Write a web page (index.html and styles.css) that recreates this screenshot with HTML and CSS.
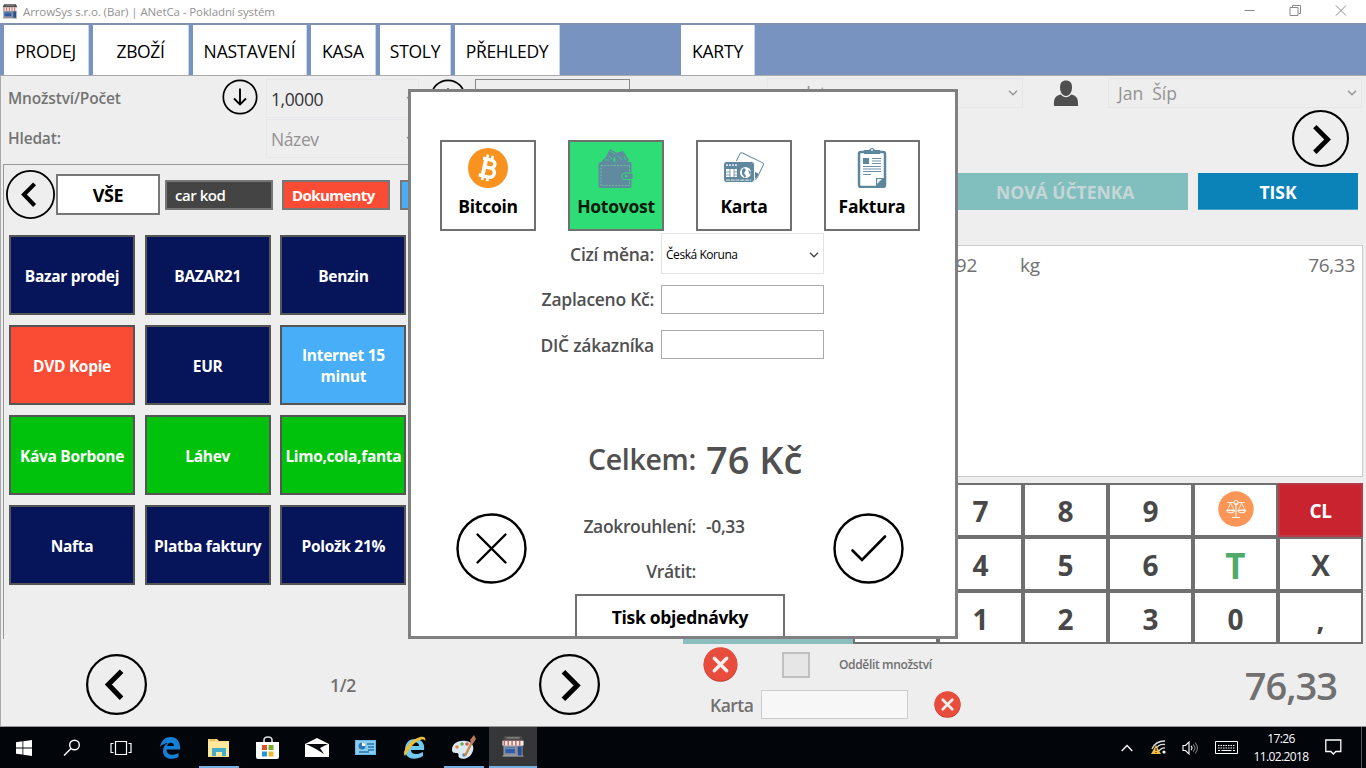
FILE: index.html
```html
<!DOCTYPE html>
<html lang="cs">
<head>
<meta charset="utf-8">
<title>ArrowSys s.r.o. (Bar) | ANetCa - Pokladní systém</title>
<link rel="stylesheet" href="styles.css">
</head>
<body>
<svg class="defs" width="0" height="0">
  <symbol id="left" viewBox="0 0 60 60"><circle cx="30" cy="30" r="28.9" fill="none" stroke="#000" stroke-width="2.2"/><path d="M35 17 22 30 35 43.5" fill="none" stroke="#000" stroke-width="5"/></symbol>
  <symbol id="right" viewBox="0 0 60 60"><circle cx="30" cy="30" r="28.9" fill="none" stroke="#000" stroke-width="2.2"/><path d="M24 17.500 37.500 31 24 44.500" fill="none" stroke="#000" stroke-width="5"/></symbol>
  <symbol id="down" viewBox="0 0 36 36"><circle cx="18" cy="18" r="16.700" fill="none" stroke="#000" stroke-width="1.700"/><path d="M18 9.500V25M12 19.500 18 25.500 24 19.500" fill="none" stroke="#000" stroke-width="1.900"/></symbol>
  <symbol id="chev" viewBox="0 0 10 6"><path d="M1 .8 5 4.800 9 .8" fill="none" stroke="currentColor" stroke-width="1.300"/></symbol>
  <symbol id="del" viewBox="0 0 34 34"><circle cx="17" cy="17.300" r="16.500" fill="#c0392b"/><circle cx="17" cy="16.600" r="16.300" fill="#e84c3d"/><path d="M11 11 23 23M23 11 11 23" stroke="#f7eeee" stroke-width="3.400" stroke-linecap="round"/></symbol>
  <symbol id="shop" viewBox="0 0 24 24"><path d="M3 1h18l2 5H1z" fill="#4b4749"/><path d="M5 2h14v2H5z" fill="#777"/><path d="M2 10h20v12H2z" fill="#8b8f9c"/><path d="M1 6h22v5H1z" fill="#f5eeee"/><path d="M3 6v5M7 6v5M11 6v5M15 6v5M19 6v5" stroke="#c9645e" stroke-width="1.600"/><path d="M4 13h10v6H4z" fill="#2e5ba6"/><path d="M4 14h10" stroke="#7799c8"/><path d="M17 12h4v10h-4z" fill="#294e92"/><path d="M1 22h22" stroke="#aaa"/></symbol>
</svg>

<header class="titlebar">
  <svg class="app-icon" width="16" height="17"><use href="#shop"/></svg>
  <span class="title">ArrowSys s.r.o. (Bar) | ANetCa - Pokladní systém</span>
  <svg class="winbtns" width="104" height="14" fill="none" stroke="#8a8a8a"><path d="M.500 7.500h10M46 4.500h8v8h-8zM48.500 4V2.500h8v8H54.500M92 2.500l10 10M102 2.500l-10 10"/></svg>
</header>
<nav class="nav">
  <a class="tab prodej">PRODEJ</a><a class="tab zbozi">ZBOŽÍ</a><a class="tab nast">NASTAVENÍ</a><a class="tab kasa">KASA</a><a class="tab stoly">STOLY</a><a class="tab preh">PŘEHLEDY</a><a class="tab karty">KARTY</a>
</nav>

<main class="main">
  <section class="left">
    <div class="row qty">
      <span class="lbl">Množství/Počet</span>
      <svg class="down" width="36" height="36"><use href="#down"/></svg>
      <div class="combo"><span>1,0000</span><svg width="9" height="6"><use href="#chev"/></svg></div>
      <svg class="down second" width="36" height="36"><use href="#down"/></svg>
      <div class="blank"></div>
    </div>
    <div class="row search">
      <span class="lbl">Hledat:</span>
      <div class="combo"><span>Název</span><svg width="9" height="6"><use href="#chev"/></svg></div>
    </div>
    <div class="panel">
      <div class="cats">
        <svg width="49" height="49"><use href="#left"/></svg>
        <button class="cat all">VŠE</button>
        <button class="cat black">car kod</button>
        <button class="cat red">Dokumenty</button>
        <button class="cat sky"></button>
      </div>
      <div class="tiles">
        <button class="tile">Bazar prodej</button><button class="tile">BAZAR21</button><button class="tile">Benzin</button>
        <button class="tile red">DVD Kopie</button><button class="tile">EUR</button><button class="tile sky">Internet 15<br>minut</button>
        <button class="tile green">Káva Borbone</button><button class="tile green">Láhev</button><button class="tile green">Limo,cola,fanta</button>
        <button class="tile">Nafta</button><button class="tile">Platba faktury</button><button class="tile">Položk 21%</button>
      </div>
    </div>
    <div class="pager">
      <svg width="61" height="61"><use href="#left"/></svg>
      <span>1/2</span>
      <svg width="61" height="61"><use href="#right"/></svg>
    </div>
  </section>

  <section class="right">
    <div class="users">
      <div class="combo first"><span>det</span><svg width="10" height="6"><use href="#chev"/></svg></div>
      <svg class="user" width="26" height="27" viewBox="0 0 26 27"><path d="M1 26C.500 19 2 15.500 8 14.500 10.500 18 15.500 18 18 14.500 24 15.500 25.500 19 25 26z" fill="#4f4f4f"/><path d="M13 .500C9 .500 7 3 7 7.500S9.500 16 13 16 19 12 19 7.500 17 .500 13 .500z" fill="#4f4f4f"/></svg>
      <div class="combo person"><span>Jan&nbsp; Šíp</span><svg width="10" height="6"><use href="#chev"/></svg></div>
    </div>
    <svg class="next" width="57" height="57"><use href="#right"/></svg>
    <div class="actions"><button class="new">NOVÁ ÚČTENKA</button><button class="print">TISK</button></div>
    <div class="list"><div class="item"><span class="amt">0,092</span><span class="unit">kg</span><span>76,33</span></div></div>
    <div class="pad">
      <button class="teal"></button><button></button><button>7</button><button>8</button><button>9</button>
      <button class="scale"><svg width="36" height="36" viewBox="0 0 36 36"><circle cx="18" cy="18" r="17.700" fill="#fb9657"/><g fill="none" stroke="#fff3e8" stroke-width="1.200"><path d="M18 12v14.500M14 26.500h8M9.500 11.500h6.500M20 11.500h6.500"/><circle cx="18" cy="11.500" r="2"/><path d="M12.500 12 9.500 19h6.500zM23.500 12 20.500 19h6.500z" stroke-width=".9"/><path d="M9 19.500c.500 3 6.500 3 7.500 0zM20 19.500c.500 3 6.500 3 7.500 0z"/></g></svg></button>
      <button class="cl">CL</button>
      <button></button><button>4</button><button>5</button><button>6</button><button class="t">T</button><button>X</button>
      <button></button><button>1</button><button>2</button><button>3</button><button>0</button><button>,</button>
    </div>
    <div class="foot">
      <div class="foot-form">
        <div class="split"><svg width="35" height="35"><use href="#del"/></svg><i class="check"></i><span>Oddělit množství</span></div>
        <div class="card"><span>Karta</span><i class="field"></i><svg width="27" height="27"><use href="#del"/></svg></div>
      </div>
      <span class="sum">76,33</span>
    </div>
  </section>
</main>

<div class="modal">
  <div class="methods">
    <button class="method"><svg width="40" height="40" viewBox="0 0 40 40"><circle cx="20" cy="20" r="20" fill="#f7931e"/><g transform="rotate(13 20 20)" fill="none" stroke="#fff"><path d="M13 11.500h8.500c6 0 6 8 0 8H16M16 19.500h6.500c6.500 0 6.500 9.300 0 9.300H12.500" stroke-width="3.400"/><path d="M16.300 11v18" stroke-width="4"/><path d="M17 7v4M22 7v4M17 29v4M22 29v4" stroke-width="2.600"/></g></svg><span>Bitcoin</span></button>
    <button class="method on"><svg width="40" height="40" viewBox="0 0 40 40"><g fill="#608aa0"><path d="M10 9 14 1l7 4-5 8z"/><path d="M20 5 27 3l6 9-3 3-12-1z"/><path d="M6 13 10 9h5l3 5-2 2H7z"/><path d="M5 14h29q1.500 0 1.500 2v22q0 2-2 2H5q-2.500 0-2.500-2.500V16q0-2 2.500-2z"/></g><path d="M5 17.500h28.500v20H5z" fill="none" stroke="#77c59b" stroke-width=".8" stroke-dasharray="2 1.200"/><path d="M13 8l3 3M22 8l4 4M9 12h4M28 8l2 4M19 10v4M14 3l5 3" stroke="#2edd75" stroke-width=".9"/><path d="M37 25h-8a3.300 3.300 0 0 0 0 6.600H37z" fill="#608aa0" stroke="#2edd75"/><circle cx="30" cy="28.300" r="1.200" fill="#2edd75"/></svg><span>Hotovost</span></button>
    <button class="method"><svg width="40" height="40" viewBox="0 0 40 40"><g transform="rotate(26 26 17)"><rect x="12" y="9.500" width="26" height="18" rx="2" fill="#fff" stroke="#668a9d"/><path d="M12.500 21h25v5h-25z" fill="#587f93"/></g><rect x="-.5" y="13.500" width="31" height="21" rx="3" fill="#5f879d" stroke="#fff"/><path d="M2 21h11v8H2z" fill="#fff"/><path d="M2 24h4M2 27h4M10 24h3M10 27h3M6 21v8M10 21v8" stroke="#5f879d" stroke-width=".8"/><circle cx="21.500" cy="24.500" r="5.500" fill="#fff"/><path d="M18 22l2-2 2 2-2 3 2 3-1 2-3-4zM24 22l3 2-1 3z" fill="#5f879d"/><path d="M2 17.200h12" stroke="#d9e5eb" stroke-width="1.800" stroke-dasharray="2 1"/><path d="M2 32.200h25" stroke="#c9d8e0" stroke-width="1.200" stroke-dasharray="4 .7"/></svg><span>Karta</span></button>
    <button class="method"><svg width="40" height="40" viewBox="0 0 40 40"><rect x="7" y="4" width="26" height="35" rx="2" fill="#fff" stroke="#5d879b" stroke-width="2.500"/><path d="M12 2h5q3-4 6 0h5v4H12z" fill="#5d879b"/><circle cx="20" cy="2" r=".9" fill="#fff"/><path d="M11 10h6v6h-6z" fill="#5d879b"/><path d="M20 10.500h9M20 13h9M20 15.500h9M11 18.500h18M11 21h18M11 23.500h18M11 26.500h8" stroke="#6e93a5" stroke-width="1.100"/><path d="M24 38.500V30h8.500M24 38 32.500 30V39H24z" fill="#5d879b"/><path d="M25 36v-5h5z" fill="#e8f0f3"/></svg><span>Faktura</span></button>
  </div>
  <div class="form">
    <label>Cizí měna:</label><div class="select"><span>Česká Koruna</span><svg width="10" height="6"><use href="#chev"/></svg></div>
    <label>Zaplaceno Kč:</label><i class="input"></i>
    <label>DIČ zákazníka</label><i class="input"></i>
  </div>
  <div class="total"><span class="total-label">Celkem:</span><strong>76 Kč</strong></div>
  <div class="confirm">
    <svg width="71" height="71" viewBox="0 0 71 71" fill="none" stroke="#000" stroke-width="2.400" stroke-linecap="round"><circle cx="35.500" cy="35.500" r="34"/><path d="M21.500 21.500 49.500 49.500M49.500 21.500 21.500 49.500"/></svg>
    <div class="sums"><span>Zaokrouhlení:</span><span>-0,33</span><span>Vrátit:</span><span></span></div>
    <svg width="71" height="71" viewBox="0 0 71 71" fill="none" stroke="#000" stroke-width="2.400" stroke-linecap="round"><circle cx="35.500" cy="35.500" r="34"/><path d="M19.500 37.500 29 47 52 23.500" stroke-width="2.600"/></svg>
  </div>
  <button class="order">Tisk objednávky</button>
</div>

<footer class="taskbar">
  <div class="apps">
    <span class="app"><svg width="16" height="16" fill="#fff"><path d="M0 2.200 6.500 1.300V7.500H0zM7.300 1.200 16 0V7.500H7.300zM0 8.400h6.500v6.200L0 13.700zM7.300 8.400H16V16l-8.700-1.200z"/></svg></span>
    <span class="app"><svg width="18" height="18" fill="none" stroke="#fff" stroke-width="1.400"><circle cx="11.500" cy="6" r="4.800"/><path d="M8 9.500 1 16.500"/></svg></span>
    <span class="app"><svg width="22" height="16" fill="none" stroke="#fff" stroke-width="1.200"><path d="M5.500 1.500h11v13h-11zM3.500 3.500H1v9h2.500M18.500 3.500H21v9h-2.500"/></svg></span>
    <span class="app edge"><svg width="20" height="22" viewBox="0 0 20 22"><path d="M0 10C1 4 5 0 10.500 0 17 0 20 5 20 10v2.500H6.500c0 6 7 6.500 12 3.500v4C13 23 3 23 3 14c0-4 2-6.500 5-8C5 6.200 2 7.500 0 10zM7 9h7c0-4.500-6-4.500-7 0z" fill="#1480d8"/></svg></span>
    <span class="app run"><svg width="22" height="19" viewBox="0 0 22 19"><path d="M0 1h9l2 2h10v16H0z" fill="#f9dc83"/><path d="M0 4h21v14H0z" fill="#ffe79b"/><path d="M4 18v-8h14v8h-4v-4H8v4z" fill="#43acc8"/><path d="M2 2h5" stroke="#d4a13b"/></svg></span>
    <span class="app"><svg width="24" height="24" viewBox="0 0 24 24"><path d="M8 7V4c0-4 8-4 8 0v3" fill="none" stroke="#ddd" stroke-width="1.600"/><path d="M0 6h23v15q0 2-2 2H2q-2 0-2-2z" fill="#fff"/><path d="M6 9h5v5H6z" fill="#d9532c"/><path d="M12.500 9h5v5h-5z" fill="#7dac2d"/><path d="M6 15.500h5v5H6z" fill="#2997ce"/><path d="M12.500 15.500h5v5h-5z" fill="#f0b82e"/></svg></span>
    <span class="app"><svg width="24" height="20" viewBox="0 0 24 20"><path d="M0 6 12 0 24 6V19H0z" fill="#fff"/><path d="M1 6h22L15 10l4 6-8-5z" fill="#05070b"/></svg></span>
    <span class="app"><svg width="22" height="16" viewBox="0 0 22 16"><path d="M0 0h21v15H0z" fill="#65b7e8"/><path d="M1 1h19v13H1z" fill="#8acbf0"/><circle cx="7" cy="6" r="3.500" fill="#2d78b5"/><path d="M7 6V2.500A3.500 3.500 0 0 1 10.500 6z" fill="#fff"/><path d="M12 4h7M13 7h6M13 10h6M4 12h10" stroke="#2575a9" stroke-width="1.400"/></svg></span>
    <span class="app"><svg width="24" height="24" viewBox="0 0 24 24"><path d="M2 14C2 6 7 3 12 3c7 0 10 5 9 11H8c0 5 7 5 12 2v4C12 25 2 23 2 14zM8 10h8c0-5-8-5-8 0z" fill="#70c9ee"/><path d="M2 20C-2 17 6 4 17 1c5-1 6 1 5 4-1-3-8-1-13 5-4 5-6 8-7 10z" fill="#efbe38"/></svg></span>
    <span class="app run"><svg width="26" height="25" viewBox="0 0 26 25"><path d="M1 15C1 8 8 5 15 6c7 1 9 7 6 12-2 5-9 7-12 5-3-1 0-5-3-5-2 0-5 0-5-3z" fill="#dce9f2"/><circle cx="6" cy="12" r="1.800" fill="#e08b41"/><circle cx="11" cy="9" r="1.800" fill="#67ae59"/><circle cx="16" cy="9" r="1.800" fill="#d35b51"/><circle cx="13" cy="20" r="1.800" fill="#4987cc"/><path d="M23 3 14 21" stroke="#c98c45" stroke-width="2.400"/><path d="M19 5l4-5 2 4-4 6z" fill="#b97858"/></svg></span>
    <span class="app active"><svg width="24" height="23"><use href="#shop"/></svg></span>
  </div>
  <div class="tray">
    <svg width="12" height="8" fill="none" stroke="#fff" stroke-width="1.300"><path d="M.700 7 6 1.500 11.300 7"/></svg>
    <svg class="wifi" width="16" height="15" viewBox="0 0 16 15"><g fill="none" stroke="#dcdcdc" stroke-width="1.300"><path d="M1 9C3 4 8 1 14 1M4 10c2-4 6-6 10-5.500M8 11c1-2 4-3.500 6-3"/></g><circle cx="13" cy="12" r="1.600" fill="#fff"/><path d="M5 5 10 14H0z" fill="#f2bb43"/><path d="M5 8v3M5 12v1" stroke="#222"/></svg>
    <svg class="sound" width="17" height="14" fill="none" stroke="#fff" stroke-width="1.100"><path d="M1 4.500h2.500L7 1v12L3.500 9.500H1z"/><path d="M9 5q2 2 0 4"/><path d="M11 3.500q4 3.500 0 7M13 1.500q5 5.500 0 11" stroke="#777"/></svg>
    <svg class="keys" width="24" height="14" fill="none" stroke="#fff"><path d="M.500 .500h22v12H.500z"/><path d="M3 4.500h17M3 7h17" stroke-dasharray="1.500 1"/><path d="M3 9.500h2M6.500 9.500h10M18 9.500h2"/></svg>
    <div class="clock"><span>17:26</span><span>11.02.2018</span></div>
    <svg class="note" width="17" height="17" fill="none" stroke="#fff" stroke-width="1.300"><path d="M.800 1h15v11.500h-5L8.300 15 5.800 12.500h-5z"/></svg>
    <i class="desk"></i>
  </div>
</footer>
</body>
</html>
```
FILE: styles.css
```css
* { box-sizing: border-box; }
body { margin: 0; width: 1366px; height: 768px; overflow: hidden; display: flex; flex-direction: column; background: #eee; font-family: "Open Sans", "Noto Sans", sans-serif; color: #707070; position: relative; }
button { font: inherit; padding: 0; margin: 0; border: 0; color: inherit; white-space: nowrap; }
svg { display: block; flex: none; }
i { display: block; }
.defs { position: absolute; }

.titlebar { height: 23px; flex: none; background: #fff; display: flex; align-items: center; padding-left: 2px; }
.title { font-size: 11.5px; letter-spacing: -.1px; color: #929292; margin-left: 5px; flex: 1; }
.winbtns { margin-right: 18px; margin-bottom: 3px; }

.nav { height: 52px; flex: none; background: #7893c0; border-top: 2px solid #8092b0; display: flex; padding-left: 4px; }
.tab { height: 50px; background: #fff; border-right: 1px solid #c7d7ed; color: #000; font-size: 17.5px; display: flex; align-items: center; justify-content: center; margin-right: 4px; padding-top: 2px; letter-spacing: -.4px; white-space: nowrap; }
.prodej { width: 85px; padding-right: 1px; letter-spacing: -.15px; }
.zbozi { width: 96px; }
.nast { width: 114px; letter-spacing: -.1px; }
.kasa { width: 65px; letter-spacing: -.1px; }
.stoly { width: 71px; letter-spacing: -.3px; }
.preh { width: 105px; letter-spacing: -.35px; }
.karty { width: 74px; margin-left: 117px; letter-spacing: -.2px; }

.main { height: 652px; flex: none; display: flex; border-top: 1px solid #aaa; border-left: 1px solid #aaa; border-bottom: 1px solid #999; }
.left { width: 682px; }
.right { width: 683px; }
.row { display: flex; align-items: flex-start; }
.qty { height: 43px; padding-top: 3px; }
.search { height: 45px; }
.lbl { font-weight: 600; font-size: 15.5px; letter-spacing: -.17px; height: 40px; padding-left: 7px; line-height: 39px; width: 221px; color: #747474; }
.search .lbl { width: 265px; }
.combo { display: flex; align-items: center; justify-content: space-between; border: 1px solid #e5e7eb; font-size: 17.5px; letter-spacing: -.4px; color: #929292; }
.row .combo { width: 153px; height: 39px; padding: 1px 3px 0 4px; }
.qty .combo { margin-left: 8px; color: #333; }
.qty .combo svg { color: #999; }
.second { margin-left: 11px; }
.blank { width: 155px; height: 38px; border: 1px solid #888; margin-left: 9px; }
.panel { height: 475px; margin-left: 2px; border-left: 1px solid #999; border-top: 1px solid #999; }
.cats { display: flex; align-items: center; height: 59px; padding-left: 2px; }
.cat { border: 2px solid #777; color: #fff; font-weight: 600; font-size: 15px; text-align: left; }
.all { width: 104px; height: 41px; margin-left: 1px; background: #fff; color: #000; font-size: 18px; font-weight: 700; text-align: center; letter-spacing: -.4px; }
.black { width: 108px; height: 30px; margin-left: 5px; background: #444; padding-left: 8px; letter-spacing: -.45px; }
.cat.red { width: 108px; height: 30px; margin-left: 9px; background: #fa4c34; padding-left: 8px; letter-spacing: -.6px; font-weight: 700; }
.cat.sky { width: 108px; height: 30px; margin-left: 10px; background: #48aef8; }
.tiles { display: grid; grid-template-columns: repeat(3, 126px); grid-auto-rows: 80px; gap: 10px 9.7px; margin: 11px 0 0 5px; }
.tile { border: 2px solid #555; background: #06145a; color: #fff; font-weight: 700; font-size: 15.5px; line-height: 21px; letter-spacing: -.3px; padding-top: 2px; }
.tile.red { background: #fa4c34; }
.tile.sky { background: #48aef8; }
.tile.green { background: #00c20d; }
.pager { display: flex; justify-content: space-between; align-items: center; width: 514px; margin: 15px 0 0 85px; font-size: 17.500px; font-weight: 600; letter-spacing: -.3px; }

.users { display: flex; height: 32px; padding-top: 2px; }
.users .combo { height: 30px; border-color: #e6e6e9; padding: 0 4px 0 9px; }
.users .first { width: 256px; margin-left: 84px; padding-left: 32px; }
.user { margin: 2px 30px 0 30px; }
.users .person { width: 254px; margin-left: -1px; }
.person span { letter-spacing: 0; }
.next { margin: 2px 0 0 609px; }
.actions { display: flex; gap: 10px; margin-top: 6px; }
.actions button { height: 37px; font-size: 17.500px; font-weight: 700; padding-top: 1px; }
.actions .new { width: 505px; background: #81bfbf; color: #c6d6d6; padding-left: 313px; text-align: left; letter-spacing: 0; }
.print { width: 160px; background: #0c83b8; color: #fff; border-bottom: 1px solid #4aa4cb; }
.list { height: 232px; width: 680px; margin-top: 35px; background: #fff; border: 1px solid #ccc; }
.item { display: flex; height: 38px; align-items: center; font-size: 19px; letter-spacing: -.3px; padding-right: 7px; }
.amt { width: 293px; text-align: right; }
.unit { margin-left: 43px; flex: 1; }
.pad { display: grid; grid-template-columns: 170px repeat(6, 85px); grid-template-rows: 54px 54px 53px; margin-top: 6px; width: 680px; }
.pad button { background: #fff; border: 2px solid #707070; font-weight: 700; font-size: 28px; color: #484848; display: flex; align-items: center; justify-content: center; padding-top: 2px; line-height: 1; }
.pad .teal { grid-row: span 3; background: #8bbfbf; border: 0; }
.pad .scale { padding: 0 0 2px; }
.pad .cl { background: #c92330; border-color: #b9394b; color: #fff; font-size: 19px; letter-spacing: -.5px; }
.pad .t { color: #4eac68; font-size: 35px; padding-top: 3px; }
.pad { grid-template-columns: 170px repeat(6, 85px); }
.foot { display: flex; justify-content: space-between; height: 82px; padding-right: 29px; }
.split { display: flex; align-items: center; height: 41px; padding-left: 20px; font-size: 12px; font-weight: 600; letter-spacing: -.35px; }
.check { width: 28px; height: 26px; background: #e6e6e6; border: 2px solid #c0c0c0; margin: 0 29px 0 44px; }
.card { display: flex; align-items: center; height: 39px; padding-left: 27px; font-size: 17.500px; font-weight: 600; letter-spacing: -.5px; }
.field { width: 147px; height: 29px; background: #f7f7f7; border: 1px solid #ccc; margin: 0 26px 0 8px; }
.sum { font-size: 38px; font-weight: 600; letter-spacing: -1px; line-height: 82px; }

.modal { position: absolute; left: 408px; top: 89px; width: 550px; height: 550px; background: #fff; border: 3px solid #808080; display: flex; flex-direction: column; color: #505050; }
.methods { display: flex; gap: 32px; margin: 48px 0 0 29px; }
.method { width: 96px; height: 91px; background: #fff; border: 2px solid #707070; color: #000; font-weight: 700; font-size: 17.500px; display: flex; flex-direction: column; align-items: center; padding-top: 6px; letter-spacing: -.25px; }
.method span { line-height: 22px; margin-top: 7px; }
.on { background: #2edd75; color: #061a0c; }
.form { display: grid; grid-template-columns: 243px 163px; column-gap: 7px; grid-template-rows: 41px 50px 41px; align-items: center; margin-top: 2px; }
.form label { text-align: right; font-weight: 600; font-size: 17.500px; letter-spacing: -.27px; white-space: nowrap; }
.select { align-self: stretch; border: 1px solid #e3e3e3; display: flex; align-items: center; justify-content: space-between; padding: 2px 4px 0; font-size: 12px; color: #000; letter-spacing: -.45px; }
.select svg { color: #444; }
.input { height: 29px; border: 1px solid #aaa; }
.total { display: flex; align-items: center; height: 60px; margin-top: 64px; }
.total-label { width: 285px; text-align: right; font-size: 28.5px; font-weight: 600; letter-spacing: -.3px; }
.total strong { margin-left: 10px; font-size: 38px; font-weight: 600; letter-spacing: 0; }
.confirm { display: flex; margin: 17px 0 0 45px; height: 84px; align-items: center; }
.sums { display: grid; grid-template-columns: 169px 137px; column-gap: 10px; grid-template-rows: 45px 45px; margin: 2px -10px 0 0; font-size: 17.500px; font-weight: 600; letter-spacing: -.35px; line-height: 45px; }
.sums span:nth-child(odd) { text-align: right; }
.order { width: 210px; height: 42px; margin: auto 0 0 164px; background: #fff; border: 2px solid #707070; border-bottom: 0; color: #000; font-weight: 700; font-size: 17.500px; letter-spacing: -.3px; padding-top: 2px; }

.taskbar { height: 41px; flex: none; background: #02050a; display: flex; justify-content: space-between; }
.apps { display: flex; }
.app { width: 49px; height: 41px; display: flex; align-items: center; justify-content: center; }
.app:first-child { width: 48px; }
.app:nth-child(2) { width: 48px; }
.edge { padding-left: 1px; }
.run { background: linear-gradient(#76b0e2, #76b0e2) center bottom / 40px 2px no-repeat; }
.active { background: #343638; border-bottom: 2px solid #76b0e2; width: 48px; margin-left: 1px; }
.tray { display: flex; align-items: center; color: #fff; }
.wifi { margin-left: 18px; }
.sound { margin-left: 15px; }
.keys { margin-left: 16px; }
.clock { width: 84px; display: flex; flex-direction: column; align-items: center; font-size: 12px; line-height: 18px; letter-spacing: -.6px; }
.note { margin-left: 2px; }
.desk { width: 1px; height: 41px; background: #555; margin: 0 4px 0 19px; }
```
